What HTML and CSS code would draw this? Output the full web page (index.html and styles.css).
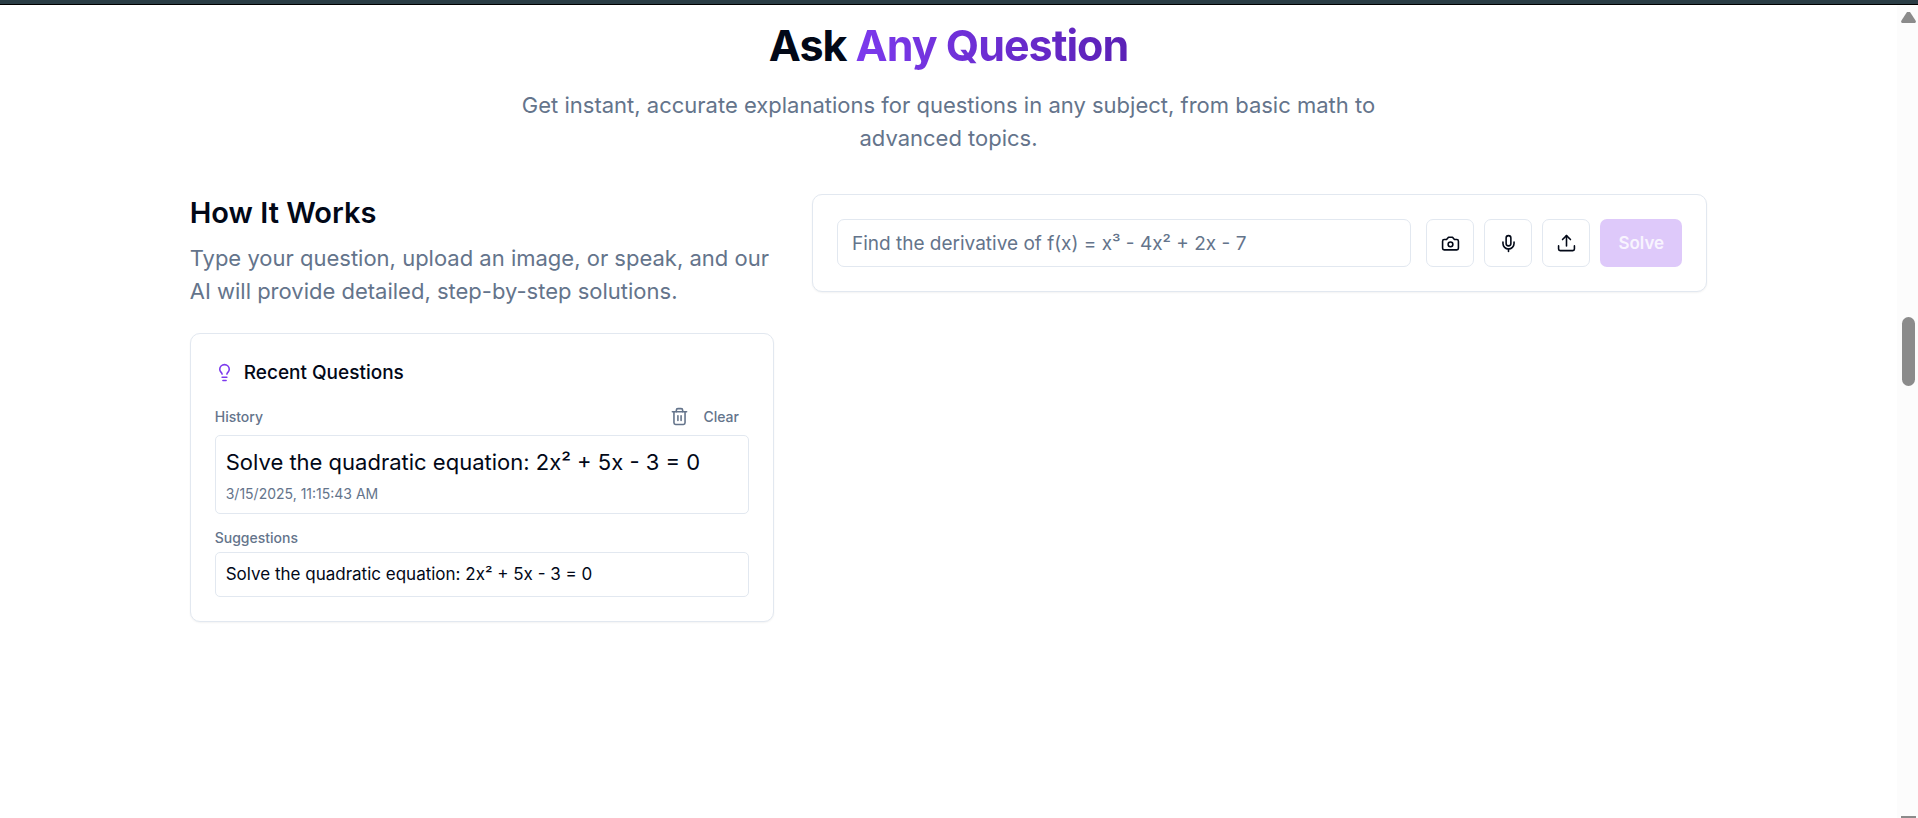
FILE: index.html
```html
<!DOCTYPE html>
<html lang="en">
<head>
    <meta charset="UTF-8">
    <meta name="viewport" content="width=device-width, initial-scale=1.0">
    <title>Ask Any Question</title>
    <link rel="stylesheet" href="styles.css">
</head>
<body>
    <div class="topbar"></div>
    <div class="view">
        <main class="page">
            <header class="intro">
                <h1>Ask <span class="grad">Any Question</span></h1>
                <p class="lead">Get instant, accurate explanations for questions in any subject, from basic math to advanced topics.</p>
            </header>
            <div class="cols">
                <section class="left">
                    <h2>How It Works</h2>
                    <p class="lead">Type your question, upload an image, or speak, and our AI will provide detailed, step-by-step solutions.</p>
                    <div class="card recent">
                        <h3>
                            <svg class="bulb" viewBox="0 0 24 24"><path d="M15 14c.2-1 .7-1.7 1.5-2.5 1-.9 1.5-2.2 1.5-3.5A6 6 0 0 0 6 8c0 1 .2 2.2 1.5 3.5.7.7 1.3 1.5 1.5 2.5"/><path d="M9 18h6"/><path d="M10 22h4"/></svg>
                            Recent Questions
                        </h3>
                        <div class="row">
                            <h4>History</h4>
                            <button class="clear" type="button">
                                <svg viewBox="0 0 24 24"><path d="M3 6h18"/><path d="M19 6v14c0 1-1 2-2 2H7c-1 0-2-1-2-2V6"/><path d="M8 6V4c0-1 1-2 2-2h4c1 0 2 1 2 2v2"/><path d="M10 11v6"/><path d="M14 11v6"/></svg>
                                Clear
                            </button>
                        </div>
                        <button class="item" type="button">
                            <span class="question">Solve the quadratic equation: 2x² + 5x - 3 = 0</span>
                            <span class="time">3/15/2025, 11:15:43 AM</span>
                        </button>
                        <h4 class="sug">Suggestions</h4>
                        <button class="item small" type="button">Solve the quadratic equation: 2x² + 5x - 3 = 0</button>
                    </div>
                </section>
                <section class="right">
                    <form class="card ask">
                        <input type="text" aria-label="Your question" placeholder="Find the derivative of f(x) = x³ - 4x² + 2x - 7">
                        <div class="tools">
                            <button class="tool" type="button" aria-label="Take a photo">
                                <svg viewBox="0 0 24 24"><path d="M14.5 4h-5L7 7H4a2 2 0 0 0-2 2v9a2 2 0 0 0 2 2h16a2 2 0 0 0 2-2V9a2 2 0 0 0-2-2h-3l-2.5-3z"/><circle cx="12" cy="13" r="3"/></svg>
                            </button>
                            <button class="tool" type="button" aria-label="Speak">
                                <svg viewBox="0 0 24 24"><path d="M12 2a3 3 0 0 0-3 3v7a3 3 0 0 0 6 0V5a3 3 0 0 0-3-3Z"/><path d="M19 10v2a7 7 0 0 1-14 0v-2"/><path d="M12 19v3"/></svg>
                            </button>
                            <button class="tool" type="button" aria-label="Upload">
                                <svg viewBox="0 0 24 24"><path d="M2 15v4a2 2 0 0 0 2 2h16a2 2 0 0 0 2-2v-4"/><path d="m17 7-5-5-5 5"/><path d="M12 2v13"/></svg>
                            </button>
                            <button class="solve" type="submit" disabled>Solve</button>
                        </div>
                    </form>
                </section>
            </div>
        </main>
        <div class="scroll">
            <div class="up"></div>
            <div class="thumb"></div>
            <div class="down"></div>
        </div>
    </div>
</body>
</html>
```
FILE: styles.css
```css
*{
    margin:0;
    padding:0;
    box-sizing:border-box;
}
body{
    height:100vh;
    overflow:hidden;
    display:flex;
    flex-direction:column;
    background:#fff;
    color:#020817;
    font-family:Inter, "Liberation Sans", sans-serif;
}
button,input{
    font:inherit;
    color:inherit;
    background:#fff;
}
svg{
    width:19px;
    height:19px;
    flex:none;
    fill:none;
    stroke:currentColor;
    stroke-width:2;
    stroke-linecap:round;
    stroke-linejoin:round;
}
.topbar{
    height:5px;
    flex:none;
    background:#2a3d45;
    border-bottom:1px solid #000;
}
.view{
    flex:1;
    min-height:0;
    display:flex;
}
.page{
    flex:1;
    padding-top:14px;
}
.intro{
    max-width:922px;
    margin:0 auto 39px;
    text-align:center;
}
h1{
    font-size:43px;
    line-height:52px;
    font-weight:700;
    letter-spacing:-1px;
    margin-bottom:18px;
}
.grad{
    background:linear-gradient(to right,#7c3aed,#5b21b6);
    -webkit-background-clip:text;
    background-clip:text;
    color:transparent;
}
.lead{
    font-size:22px;
    line-height:33px;
    color:#64748b;
}
.cols{
    width:80%;
    margin:0 auto;
    display:grid;
    grid-template-columns:repeat(5,1fr);
    column-gap:38px;
    align-items:start;
}
.left{
    grid-column:span 2;
}
.right{
    grid-column:span 3;
}
h2{
    font-size:29px;
    line-height:38px;
    font-weight:600;
    margin-bottom:10px;
}
.card{
    border:1px solid #e2e8f0;
    border-radius:10px;
    background:#fff;
    box-shadow:0 1px 2px rgba(0,0,0,.05);
    padding:24px;
}
.recent{
    margin-top:25px;
}
h3{
    display:flex;
    align-items:center;
    gap:10px;
    font-size:19px;
    line-height:29px;
    font-weight:500;
    margin-bottom:10px;
}
.bulb{
    color:#7c3aed;
}
.row{
    display:flex;
    justify-content:space-between;
    align-items:center;
}
h4{
    font-size:14px;
    line-height:19px;
    font-weight:500;
    color:#64748b;
}
.clear{
    display:flex;
    align-items:center;
    gap:14px;
    height:38px;
    padding:0 10px;
    border:0;
    font-size:14px;
    font-weight:500;
    color:#64748b;
}
.item{
    display:block;
    width:100%;
    border:1px solid #e2e8f0;
    border-radius:5px;
    padding:10px;
    text-align:left;
}
.question{
    display:block;
    font-size:22px;
    line-height:33px;
}
.time{
    display:block;
    margin-top:5px;
    font-size:14px;
    line-height:19px;
    color:#64748b;
}
.sug{
    margin:14px 0 5px;
}
.small{
    font-size:17px;
    line-height:23px;
}
.ask{
    display:flex;
    gap:15px;
}
.ask input{
    flex:1;
    min-width:0;
    height:48px;
    padding:0 14px;
    border:1px solid #e2e8f0;
    border-radius:7px;
    font-size:19px;
}
.ask input::placeholder{
    color:#64748b;
    opacity:1;
}
.tools{
    display:flex;
    gap:10px;
}
.tool{
    width:48px;
    height:48px;
    display:flex;
    align-items:center;
    justify-content:center;
    border:1px solid #e2e8f0;
    border-radius:7px;
}
.solve{
    width:82px;
    border:0;
    border-radius:7px;
    background:#dec9fa;
    color:#f8f4fe;
    font-size:17px;
    font-weight:600;
}
.scroll{
    width:21px;
    flex:none;
    display:flex;
    flex-direction:column;
    align-items:center;
    background:#fcfcfc;
    padding:7px 0 0 2px;
}
.up,.down{
    width:15px;
    height:11px;
    background:#8b8b8b;
    clip-path:polygon(40% 0,60% 0,100% 85%,95% 100%,5% 100%,0 85%);
}
.thumb{
    width:13px;
    height:69px;
    margin-top:294px;
    border-radius:7px;
    background:#8b8b8b;
}
.down{
    height:2px;
    margin-top:auto;
    clip-path:none;
}
```
